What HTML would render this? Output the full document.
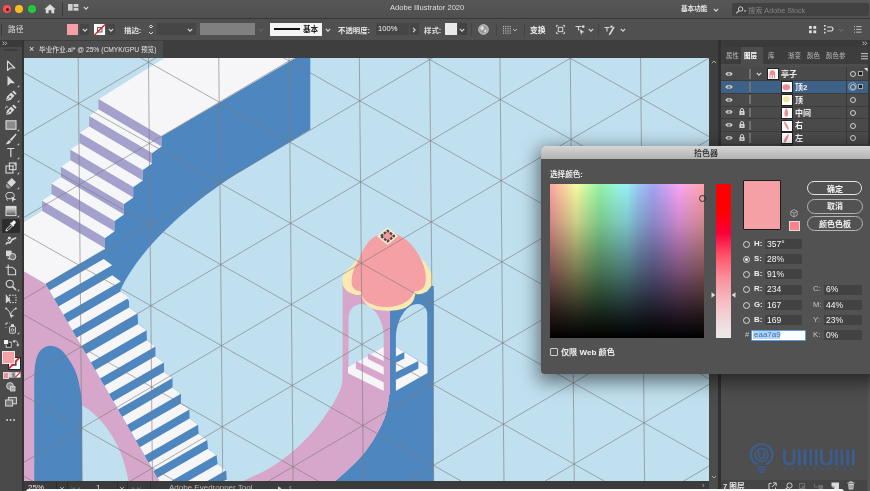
<!DOCTYPE html>
<html lang="zh"><head><meta charset="utf-8"><title>Adobe Illustrator 2020</title>
<style>
html,body{margin:0;padding:0}
body{width:870px;height:491px;position:relative;overflow:hidden;background:#4a4a4a;font-family:"Liberation Sans","Noto Sans CJK SC",sans-serif;font-size:8px;line-height:10px;color:#e6e6e6}
.abs{position:absolute}
.t{position:absolute;white-space:nowrap;line-height:10px;height:10px;will-change:transform}
.b{font-weight:bold}
.inp{position:absolute;background:#424242;border-radius:1px}
svg{overflow:visible}
</style></head>
<body>
<div class="abs" style="left:0px;top:0px;width:870px;height:19px;background:#515151;background:linear-gradient(#575757,#4f4f4f)"></div>
<div class="abs" style="left:0px;top:18px;width:870px;height:1.2px;background:#383838;"></div>
<div class="abs" style="left:3.4px;top:5.299999999999999px;width:7.8px;height:7.8px;border-radius:50%;background:#fc4f55"></div>
<div class="abs" style="left:5.8px;top:7.699999999999999px;width:3px;height:3px;border-radius:50%;background:#5a0a0d"></div>
<div class="abs" style="left:15.4px;top:5.299999999999999px;width:7.8px;height:7.8px;border-radius:50%;background:#fdbc1e"></div>
<div class="abs" style="left:27.8px;top:5.299999999999999px;width:7.8px;height:7.8px;border-radius:50%;background:#1fca3c"></div>
<svg class="abs" style="left:44px;top:4px" width="12" height="10" viewBox="0 0 12 10"><path d="M6,0.3 L0.3,5.2 H1.8 V9.3 H4.6 V6.2 H7.4 V9.3 H10.2 V5.2 H11.7 Z" fill="#dcdcdc"/></svg>
<div class="abs" style="left:62px;top:2px;width:1px;height:14px;background:#3a3a3a;"></div>
<svg class="abs" style="left:67.8px;top:4.3px" width="11" height="7" viewBox="0 0 11 7"><rect x="0" y="0" width="4.6" height="6.7" fill="#cfcfcf"/><rect x="5.6" y="0" width="4.8" height="2.9" fill="#cfcfcf"/><rect x="5.6" y="3.8" width="4.8" height="2.9" fill="#cfcfcf"/></svg>
<svg class="abs" style="left:81.7px;top:3.8px" width="8" height="8" viewBox="-4 -4 8 8"><path d="M-2.2,-1.1 L0,1.1 L2.2,-1.1" fill="none" stroke="#d8d8d8" stroke-width="1.1"/></svg>
<div class="t" style="left:390px;top:3.3px;font-size:7.6px;color:#dedede">Adobe Illustrator 2020</div>
<div class="t b" style="left:681px;top:4.4px;font-size:6.6px;color:#e8e8e8">基本功能</div>
<svg class="abs" style="left:712px;top:5.800000000000001px" width="8" height="8" viewBox="-4 -4 8 8"><path d="M-2.2,-1.1 L0,1.1 L2.2,-1.1" fill="none" stroke="#d8d8d8" stroke-width="1.1"/></svg>
<div class="abs" style="left:732px;top:3px;width:136.5px;height:12.6px;background:#424242;border-radius:2px"></div>
<svg class="abs" style="left:735px;top:5.5px" width="12" height="8" viewBox="0 0 12 8"><circle cx="5.6" cy="3" r="2.2" fill="none" stroke="#cfcfcf" stroke-width="1"/><path d="M4,4.6 L1.2,7.4" stroke="#cfcfcf" stroke-width="1.1"/><path d="M8.6,4.6 L10,6 L11.4,4.6 Z" fill="#cfcfcf"/></svg>
<div class="t" style="left:748px;top:5.6px;font-size:7.2px;color:#858585">搜索 Adobe Stock</div>
<div class="abs" style="left:0px;top:19.2px;width:870px;height:20.8px;background:#505050;"></div>
<div class="abs" style="left:1.2px;top:23.5px;width:1.2px;height:12.5px;background:#3a3a3a;"></div>
<div class="t" style="left:7.5px;top:25.4px;font-size:7.8px;color:#dadada">路径</div>
<div class="abs" style="left:67px;top:23.6px;width:11.3px;height:11.6px;background:#f4a0a4;"></div>
<div class="abs" style="left:80px;top:23.6px;width:8.6px;height:11.6px;background:#464646;"></div>
<svg class="abs" style="left:80.5px;top:25.6px" width="8" height="8" viewBox="-4 -4 8 8"><path d="M-2.2,-1.1 L0,1.1 L2.2,-1.1" fill="none" stroke="#d8d8d8" stroke-width="1.1"/></svg>
<div class="abs" style="left:93.5px;top:23.6px;width:11.6px;height:11.6px;background:#ffffff;"></div>
<svg class="abs" style="left:93.5px;top:23.6px" width="11.6" height="11.6" viewBox="0 0 11.6 11.6"><rect x="3.6" y="3.6" width="4.4" height="4.4" fill="none" stroke="#555" stroke-width="1"/><path d="M0.5,11.1 L11.1,0.5" stroke="#e0202a" stroke-width="1.5"/></svg>
<div class="abs" style="left:106.5px;top:23.6px;width:8.6px;height:11.6px;background:#464646;"></div>
<svg class="abs" style="left:106.6px;top:25.6px" width="8" height="8" viewBox="-4 -4 8 8"><path d="M-2.2,-1.1 L0,1.1 L2.2,-1.1" fill="none" stroke="#d8d8d8" stroke-width="1.1"/></svg>
<div class="t b" style="left:124px;top:25.6px;font-size:7.4px;color:#e0e0e0">描边:</div>
<svg class="abs" style="left:146.6px;top:22.6px" width="8" height="8" viewBox="-4 -4 8 8"><path d="M-2,-1.0 L0,1.0 L2,-1.0" fill="none" stroke="#d8d8d8" stroke-width="1"/></svg>
<svg class="abs" style="left:146.6px;top:28.5px" width="8" height="8" viewBox="-4 -4 8 8"><path d="M-2,-1 L0,1 L2,-1" fill="none" stroke="#d8d8d8" stroke-width="1"/></svg>
<svg class="abs" style="left:146.6px;top:22.3px" width="8" height="8" viewBox="-4 -4 8 8"><path d="M-2,1 L0,-1 L2,1" fill="none" stroke="#d8d8d8" stroke-width="1"/></svg>
<div class="abs" style="left:156.5px;top:23.3px;width:39px;height:12.2px;background:#464646;border-radius:1px"></div>
<svg class="abs" style="left:186.3px;top:25.6px" width="8" height="8" viewBox="-4 -4 8 8"><path d="M-2.2,-1.1 L0,1.1 L2.2,-1.1" fill="none" stroke="#d8d8d8" stroke-width="1.1"/></svg>
<div class="abs" style="left:200px;top:23.3px;width:54.5px;height:12.2px;background:#808080;"></div>
<svg class="abs" style="left:257px;top:25.6px" width="8" height="8" viewBox="-4 -4 8 8"><path d="M-2.2,-1.1 L0,1.1 L2.2,-1.1" fill="none" stroke="#666" stroke-width="1.1"/></svg>
<div class="abs" style="left:270px;top:22.8px;width:52px;height:12.8px;background:#f4f4f4;"></div>
<div class="abs" style="left:273.5px;top:28.3px;width:26.5px;height:2px;background:#111;"></div>
<div class="t b" style="left:303.2px;top:25.4px;font-size:7.6px;color:#222">基本</div>
<svg class="abs" style="left:324px;top:25.6px" width="8" height="8" viewBox="-4 -4 8 8"><path d="M-2.2,-1.1 L0,1.1 L2.2,-1.1" fill="none" stroke="#d8d8d8" stroke-width="1.1"/></svg>
<div class="t b" style="left:338px;top:25.6px;font-size:7.4px;color:#e6e6e6">不透明度:</div>
<div class="abs" style="left:375.5px;top:23.3px;width:33px;height:12.2px;background:#464646;border-radius:1px"></div>
<div class="t" style="left:378px;top:23.7px;font-size:7.6px;color:#f0f0f0">100%</div>
<div class="abs" style="left:409.5px;top:23.3px;width:9.5px;height:12.2px;background:#454545;"></div>
<svg class="abs" style="left:410px;top:25.5px" width="8" height="8" viewBox="-4 -4 8 8"><path d="M-1,-2.2 L1.2,0 L-1,2.2" fill="none" stroke="#d8d8d8" stroke-width="1.1"/></svg>
<div class="t b" style="left:423.5px;top:25.6px;font-size:7.4px;color:#e0e0e0">样式:</div>
<div class="abs" style="left:445px;top:23.3px;width:12.4px;height:12.2px;background:#e9e9e9;"></div>
<div class="abs" style="left:458px;top:23.3px;width:9px;height:12.2px;background:#424242;"></div>
<svg class="abs" style="left:458.3px;top:25.6px" width="8" height="8" viewBox="-4 -4 8 8"><path d="M-2.2,-1.1 L0,1.1 L2.2,-1.1" fill="none" stroke="#d8d8d8" stroke-width="1.1"/></svg>
<div class="abs" style="left:470.5px;top:22.5px;width:1px;height:13.5px;background:#444;"></div>
<div class="abs" style="left:495.5px;top:22.5px;width:1px;height:13.5px;background:#444;"></div>
<div class="abs" style="left:523.5px;top:22.5px;width:1px;height:13.5px;background:#444;"></div>
<div class="abs" style="left:597.5px;top:22.5px;width:1px;height:13.5px;background:#444;"></div>
<svg class="abs" style="left:477.5px;top:23.8px" width="11" height="11" viewBox="0 0 11 11"><circle cx="5.5" cy="5.5" r="4.8" fill="#9a9a9a" stroke="#d5d5d5" stroke-width="0.9"/><path d="M2.5,3 L5,2 L6,4.5 L4,6.5 L2.6,5.5 Z M6.5,6 L8.6,5.5 L8,8.2 L6.3,8.4 Z" fill="#dedede"/></svg>
<svg class="abs" style="left:503px;top:25.6px" width="8" height="8" viewBox="0 0 8 8"><rect x="0" y="0" width="1.1" height="1.1" fill="#c8c8c8"/><rect x="0" y="2.2" width="1.1" height="1.1" fill="#c8c8c8"/><rect x="0" y="4.4" width="1.1" height="1.1" fill="#c8c8c8"/><rect x="0" y="6.6" width="1.1" height="1.1" fill="#c8c8c8"/><rect x="2.2" y="0" width="1.1" height="1.1" fill="#c8c8c8"/><rect x="2.2" y="2.2" width="1.1" height="1.1" fill="#c8c8c8"/><rect x="2.2" y="4.4" width="1.1" height="1.1" fill="#c8c8c8"/><rect x="2.2" y="6.6" width="1.1" height="1.1" fill="#c8c8c8"/><rect x="4.4" y="0" width="1.1" height="1.1" fill="#c8c8c8"/><rect x="4.4" y="2.2" width="1.1" height="1.1" fill="#c8c8c8"/><rect x="4.4" y="4.4" width="1.1" height="1.1" fill="#c8c8c8"/><rect x="4.4" y="6.6" width="1.1" height="1.1" fill="#c8c8c8"/><rect x="6.6" y="0" width="1.1" height="1.1" fill="#c8c8c8"/><rect x="6.6" y="2.2" width="1.1" height="1.1" fill="#c8c8c8"/><rect x="6.6" y="4.4" width="1.1" height="1.1" fill="#c8c8c8"/><rect x="6.6" y="6.6" width="1.1" height="1.1" fill="#c8c8c8"/></svg>
<svg class="abs" style="left:511px;top:26px" width="8" height="8" viewBox="-4 -4 8 8"><path d="M-1.8,-0.9 L0,0.9 L1.8,-0.9" fill="none" stroke="#c8c8c8" stroke-width="1"/></svg>
<div class="t b" style="left:530px;top:25.7px;font-size:7.8px;color:#f0f0f0">变换</div>
<svg class="abs" style="left:555.8px;top:24.9px" width="9" height="9" viewBox="0 0 9 9"><rect x="2.3" y="2.3" width="4.4" height="4.4" fill="none" stroke="#d8d8d8" stroke-width="1"/><path d="M0.4,2.2 V0.4 H2.2 M6.8,0.4 H8.6 V2.2 M8.6,6.8 V8.6 H6.8 M2.2,8.6 H0.4 V6.8" fill="none" stroke="#d8d8d8" stroke-width="0.9"/></svg>
<svg class="abs" style="left:574.5px;top:24.5px" width="11" height="11" viewBox="0 0 11 11"><path d="M0.5,1.5 H6.5 M3.5,1.5 V5.5" stroke="#d8d8d8" stroke-width="1.1" fill="none"/><rect x="7" y="0.4" width="2.4" height="2.4" fill="#d8d8d8"/><path d="M4.6,4 L9.6,7.2 L7.2,7.6 L6.2,10 Z" fill="#d8d8d8"/></svg>
<svg class="abs" style="left:586.5px;top:25.6px" width="8" height="8" viewBox="-4 -4 8 8"><path d="M-2.2,-1.1 L0,1.1 L2.2,-1.1" fill="none" stroke="#d8d8d8" stroke-width="1.1"/></svg>
<svg class="abs" style="left:604px;top:24.5px" width="11" height="11" viewBox="0 0 11 11"><path d="M0.5,2.5 H5.5 M3,2.5 V6.5" stroke="#d8d8d8" stroke-width="1.1" fill="none"/><path d="M5.2,8.4 L9.4,1.6 L10.6,2.6 L6.6,9.4 L4.6,10.2 Z" fill="#d8d8d8"/><rect x="6.4" y="0.6" width="2.2" height="2.2" fill="#d8d8d8"/></svg>
<svg class="abs" style="left:619.4px;top:25.6px" width="8" height="8" viewBox="-4 -4 8 8"><path d="M-2.2,-1.1 L0,1.1 L2.2,-1.1" fill="none" stroke="#d8d8d8" stroke-width="1.1"/></svg>
<svg class="abs" style="left:809px;top:25.6px" width="8" height="8" viewBox="0 0 8 8"><rect x="0" y="0" width="2.8" height="2.8" fill="#e0e0e0"/><rect x="4.4" y="0" width="2.8" height="2.8" fill="#e0e0e0"/><rect x="0" y="4.4" width="2.8" height="2.8" fill="#e0e0e0"/><rect x="4.4" y="4.4" width="2.8" height="2.8" fill="#e0e0e0"/></svg>
<svg class="abs" style="left:824px;top:25px" width="10" height="9" viewBox="0 0 10 9"><rect x="0" y="0" width="1.6" height="1.6" fill="#e0e0e0"/><rect x="0" y="3.4" width="1.6" height="1.6" fill="#e0e0e0"/><rect x="0" y="6.8" width="1.6" height="1.6" fill="#e0e0e0"/><path d="M3,2 H7 A2,2 0 0 1 7,6 H3" fill="none" stroke="#e0e0e0" stroke-width="1.2"/></svg>
<svg class="abs" style="left:836.5px;top:25.6px" width="8" height="8" viewBox="-4 -4 8 8"><path d="M-2.2,-1.1 L0,1.1 L2.2,-1.1" fill="none" stroke="#6a6a6a" stroke-width="1.1"/></svg>
<svg class="abs" style="left:853.5px;top:26px" width="8" height="7" viewBox="0 0 8 7"><path d="M0,0.6 H1 M2.2,0.6 H7.5 M0,3.4 H1 M2.2,3.4 H7.5 M0,6.2 H1 M2.2,6.2 H7.5" stroke="#bdbdbd" stroke-width="1"/></svg>
<div class="abs" style="left:0px;top:40px;width:870px;height:17.2px;background:#3e3e3e;"></div>
<div class="abs" style="left:24px;top:41px;width:138.8px;height:16.8px;background:#4c4c4c;"></div>
<div class="t" style="left:28.5px;top:44.1px;font-size:9px;color:#e8e8e8">×</div>
<div class="t" style="left:38.5px;top:45.1px;font-size:6.7px;color:#e4e4e4">毕业作业.ai* @ 25% (CMYK/GPU 预览)</div>
<div class="abs" style="left:0px;top:40px;width:22.2px;height:451px;background:#4a4a4a;"></div>
<div class="abs" style="left:0px;top:40px;width:22.2px;height:7px;background:#3a3a3a;"></div>
<svg class="abs" style="left:2px;top:41.2px" width="6" height="5" viewBox="0 0 6 5"><path d="M0.5,0.5 L2.3,2.3 L0.5,4.1 M3,0.5 L4.8,2.3 L3,4.1" fill="none" stroke="#c4c4c4" stroke-width="0.9"/></svg>
<div class="abs" style="left:4px;top:49px;width:13.5px;height:2.4px;background:#3c3c3c;"></div>
<div class="abs" style="left:22.2px;top:40px;width:1.8px;height:451px;background:#343434;"></div>
<svg class="abs" style="left:5.0px;top:59.8px" width="12" height="12" viewBox="0 0 12 12"><path d="M2.5,1 L2.5,10.5 L5.2,8 L9.8,8 Z" fill="none" stroke="#d8d8d8" stroke-width="1.1" stroke-linejoin="round"/></svg>
<svg class="abs" style="left:5.0px;top:75.0px" width="12" height="12" viewBox="0 0 12 12"><path d="M2.5,0.8 L2.5,11 L5.4,8.3 L10,8.3 Z" fill="#d8d8d8"/></svg>
<svg class="abs" style="left:17.3px;top:85.2px" width="2.4" height="2.4" viewBox="0 0 2.4 2.4"><path d="M2.2,0 V2.2 H0 Z" fill="#c8c8c8"/></svg>
<svg class="abs" style="left:5.0px;top:89.8px" width="12" height="12" viewBox="0 0 12 12"><path d="M1,11 L2,6.5 L6.2,2.6 L9.4,5.8 L5.5,10 Z" fill="#d8d8d8"/><path d="M7.2,1.8 L8.6,0.4 L11.6,3.4 L10.2,4.8 Z" fill="#d8d8d8"/><circle cx="5.2" cy="6.8" r="1" fill="#4a4a4a"/><path d="M1.4,10.6 L4.6,7.4" stroke="#4a4a4a" stroke-width="0.7"/></svg>
<svg class="abs" style="left:17.3px;top:100.0px" width="2.4" height="2.4" viewBox="0 0 2.4 2.4"><path d="M2.2,0 V2.2 H0 Z" fill="#c8c8c8"/></svg>
<svg class="abs" style="left:5.0px;top:104.4px" width="12" height="12" viewBox="0 0 12 12"><path d="M1,11 L2,6.5 L6.2,2.6 L9.4,5.8 L5.5,10 Z" fill="#d8d8d8"/><path d="M7.2,1.8 L8.6,0.4 L11.6,3.4 L10.2,4.8 Z" fill="#d8d8d8"/><circle cx="5.2" cy="6.8" r="1" fill="#4a4a4a"/><path d="M1.4,10.6 L4.6,7.4" stroke="#4a4a4a" stroke-width="0.7"/><path d="M0.6,4.6 C0.2,1.8 2.6,1.6 2.8,3.6" fill="none" stroke="#d8d8d8" stroke-width="0.9"/></svg>
<svg class="abs" style="left:5.0px;top:118.5px" width="12" height="12" viewBox="0 0 12 12"><rect x="1" y="1.8" width="10" height="8.4" fill="#8a8a8a" stroke="#d8d8d8" stroke-width="1.1"/></svg>
<svg class="abs" style="left:17.3px;top:128.7px" width="2.4" height="2.4" viewBox="0 0 2.4 2.4"><path d="M2.2,0 V2.2 H0 Z" fill="#c8c8c8"/></svg>
<svg class="abs" style="left:5.0px;top:133.0px" width="12" height="12" viewBox="0 0 12 12"><path d="M10.8,0.6 L11.6,1.4 L6.4,8 L4.8,6.4 Z" fill="#d8d8d8"/><path d="M4.2,7 L5.8,8.6 C5.6,10.6 3,11.6 0.6,11.2 C2.2,10.4 2.2,8 4.2,7 Z" fill="#d8d8d8"/></svg>
<svg class="abs" style="left:17.3px;top:143.2px" width="2.4" height="2.4" viewBox="0 0 2.4 2.4"><path d="M2.2,0 V2.2 H0 Z" fill="#c8c8c8"/></svg>
<div class="t" style="left:6.6px;top:147.7px;font-size:12.5px;color:#d8d8d8;font-family:"Liberation Serif",serif;font-weight:bold">T</div>
<svg class="abs" style="left:17.3px;top:157.2px" width="2.4" height="2.4" viewBox="0 0 2.4 2.4"><path d="M2.2,0 V2.2 H0 Z" fill="#c8c8c8"/></svg>
<svg class="abs" style="left:5.0px;top:162.0px" width="12" height="12" viewBox="0 0 12 12"><rect x="1" y="4" width="7" height="7" fill="none" stroke="#d8d8d8" stroke-width="1.1"/><rect x="4.4" y="1" width="6.6" height="6.6" fill="none" stroke="#d8d8d8" stroke-width="1.1"/><path d="M8,4.4 L10.6,1.6 M8.6,1.4 H10.8 V3.6" fill="none" stroke="#d8d8d8" stroke-width="0.8"/></svg>
<svg class="abs" style="left:17.3px;top:172.2px" width="2.4" height="2.4" viewBox="0 0 2.4 2.4"><path d="M2.2,0 V2.2 H0 Z" fill="#c8c8c8"/></svg>
<svg class="abs" style="left:5.0px;top:176.5px" width="12" height="12" viewBox="0 0 12 12"><path d="M6.8,1 L11,5.2 L6.4,10 L2,5.8 Z" fill="#d8d8d8"/><path d="M1.6,6.6 L5.6,10.6 L4.6,11.4 H2.6 L0.6,9.2 Z" fill="#9a9a9a"/></svg>
<svg class="abs" style="left:17.3px;top:186.7px" width="2.4" height="2.4" viewBox="0 0 2.4 2.4"><path d="M2.2,0 V2.2 H0 Z" fill="#c8c8c8"/></svg>
<svg class="abs" style="left:5.0px;top:190.8px" width="12" height="12" viewBox="0 0 12 12"><ellipse cx="5" cy="4.6" rx="4.2" ry="3.2" fill="none" stroke="#d8d8d8" stroke-width="1"/><path d="M6.4,5.4 L11.4,8.8 L8.8,9 L7.6,11.4 Z" fill="#d8d8d8"/><path d="M2,7.2 C1,8.2 1.6,9.6 3,9.2" fill="none" stroke="#d8d8d8" stroke-width="0.8"/></svg>
<svg class="abs" style="left:5.0px;top:205.0px" width="12" height="12" viewBox="0 0 12 12"><defs><linearGradient id="tg" x1="0" x2="0" y1="0" y2="1"><stop offset="0" stop-color="#e8e8e8"/><stop offset="1" stop-color="#555"/></linearGradient></defs><rect x="1" y="1.4" width="10" height="9.2" fill="url(#tg)" stroke="#d8d8d8" stroke-width="1"/></svg>
<svg class="abs" style="left:17.3px;top:215.2px" width="2.4" height="2.4" viewBox="0 0 2.4 2.4"><path d="M2.2,0 V2.2 H0 Z" fill="#c8c8c8"/></svg>
<div class="abs" style="left:2.2px;top:218.8px;width:17.6px;height:14.6px;background:#2d2d2d;border-radius:1.5px"></div>
<svg class="abs" style="left:5.0px;top:220.0px" width="12" height="12" viewBox="0 0 12 12"><path d="M8.2,0.8 C9.4,-0.2 11.6,1.8 10.6,3.2 L8.8,5 L9.4,5.6 L8.4,6.6 L5,3.2 L6,2.2 L6.6,2.8 Z" fill="#f2f2f2"/><path d="M6,4.6 L7.4,6 L3,10.4 L1.2,11 L1,10.8 L1.6,9 Z" fill="none" stroke="#f2f2f2" stroke-width="0.9"/></svg>
<svg class="abs" style="left:5.0px;top:234.6px" width="12" height="12" viewBox="0 0 12 12"><path d="M1,9.6 C2.6,4.8 4.6,10.6 6.2,6 C7.2,3.2 9.4,4.6 11,2.4" fill="none" stroke="#d8d8d8" stroke-width="1.7"/><circle cx="4.4" cy="3" r="1.6" fill="#d8d8d8"/><path d="M2.4,4.6 L4.4,6.4" stroke="#d8d8d8" stroke-width="1"/></svg>
<svg class="abs" style="left:5.0px;top:249.0px" width="12" height="12" viewBox="0 0 12 12"><rect x="1" y="1.6" width="5.6" height="5.6" fill="#d8d8d8"/><circle cx="7.6" cy="7.6" r="3.2" fill="#777" stroke="#d8d8d8" stroke-width="1"/><path d="M2,8.6 L4.4,11.2 L4.6,9.6 L6,9.6 Z" fill="#d8d8d8"/></svg>
<svg class="abs" style="left:5.0px;top:264.0px" width="12" height="12" viewBox="0 0 12 12"><path d="M3.2,0.6 V11 M0.6,3.2 H7.4 L10.6,6.2 V10.8 H3.2" fill="none" stroke="#d8d8d8" stroke-width="1.1"/></svg>
<svg class="abs" style="left:5.0px;top:278.6px" width="12" height="12" viewBox="0 0 12 12"><circle cx="4.8" cy="4.8" r="3.6" fill="none" stroke="#d8d8d8" stroke-width="1.1"/><path d="M7.4,7.4 L11,11" stroke="#d8d8d8" stroke-width="1.5"/></svg>
<svg class="abs" style="left:17.3px;top:288.8px" width="2.4" height="2.4" viewBox="0 0 2.4 2.4"><path d="M2.2,0 V2.2 H0 Z" fill="#c8c8c8"/></svg>
<svg class="abs" style="left:5.0px;top:292.6px" width="12" height="12" viewBox="0 0 12 12"><path d="M0.8,1 L0.8,10.6 L3.4,8.2 L6,8.2 Z" fill="#d8d8d8"/><rect x="4.4" y="2.2" width="6.6" height="7.4" fill="none" stroke="#d8d8d8" stroke-width="1" stroke-dasharray="1.6 1.1"/></svg>
<svg class="abs" style="left:5.0px;top:306.6px" width="12" height="12" viewBox="0 0 12 12"><path d="M1.2,1.4 C3.4,3.2 4.6,5 5.6,7 C6.6,4.8 8,3 10.8,1.4" fill="none" stroke="#d8d8d8" stroke-width="1"/><circle cx="1.2" cy="1.4" r="1" fill="#d8d8d8"/><circle cx="10.8" cy="1.4" r="1" fill="#d8d8d8"/><path d="M4.4,6.4 L9.6,9 L7,9.4 L6.2,11.6 Z" fill="#d8d8d8"/></svg>
<svg class="abs" style="left:5.0px;top:322.0px" width="12" height="12" viewBox="0 0 12 12"><rect x="4.6" y="4.6" width="5.8" height="6.6" rx="0.8" fill="none" stroke="#d8d8d8" stroke-width="1"/><rect x="6" y="2.2" width="3" height="2.4" fill="#d8d8d8"/><circle cx="7.5" cy="8" r="1.3" fill="none" stroke="#d8d8d8" stroke-width="0.8"/><path d="M1,1 H3 M1,1 V3 M1,5 V5.8 M4.4,1 H5.2" stroke="#d8d8d8" stroke-width="0.9"/></svg>
<svg class="abs" style="left:17.3px;top:332.2px" width="2.4" height="2.4" viewBox="0 0 2.4 2.4"><path d="M2.2,0 V2.2 H0 Z" fill="#c8c8c8"/></svg>
<svg class="abs" style="left:2.6px;top:338.5px" width="9" height="9" viewBox="0 0 9 9"><rect x="3.2" y="3.2" width="5" height="5" fill="#222" stroke="#e0e0e0" stroke-width="0.9"/><rect x="0.6" y="0.6" width="5" height="5" fill="#f2f2f2" stroke="#222" stroke-width="0.6"/></svg>
<svg class="abs" style="left:12.4px;top:338.5px" width="8" height="8" viewBox="0 0 8 8"><path d="M1.6,2.2 C4.6,1.4 6.4,3 5.8,6.4" fill="none" stroke="#d8d8d8" stroke-width="1"/><path d="M0.4,2.4 L2.6,0.6 L2.6,4 Z M4.2,5.6 L7.4,5.6 L5.8,7.8 Z" fill="#d8d8d8"/></svg>
<div class="abs" style="left:8.2px;top:357px;width:10.8px;height:11.4px;background:#ffffff;border:0.6px solid #222"></div>
<svg class="abs" style="left:8.2px;top:357px" width="12" height="12.6" viewBox="0 0 12 12.6"><rect x="3.4" y="3.6" width="5.2" height="5.2" fill="#4a4a4a"/><path d="M0.8,11.6 L11.2,0.8" stroke="#e0202a" stroke-width="1.7"/></svg>
<div class="abs" style="left:2px;top:351px;width:10.6px;height:11.4px;background:#f4a0a4;border:0.6px solid #e8e8e8"></div>
<div class="abs" style="left:2.6px;top:372.3px;width:4.6px;height:4.6px;background:#f08d93;border:0.5px solid #ddd"></div>
<svg class="abs" style="left:8.6px;top:372px" width="6" height="6" viewBox="0 0 6 6"><defs><linearGradient id="tg2"><stop offset="0" stop-color="#fff"/><stop offset="1" stop-color="#666"/></linearGradient></defs><rect x="0.3" y="0.3" width="5" height="5" fill="url(#tg2)" stroke="#ddd" stroke-width="0.5"/></svg>
<svg class="abs" style="left:14.6px;top:372px" width="6" height="6" viewBox="0 0 6 6"><rect x="0.3" y="0.3" width="5" height="5" fill="#fff" stroke="#ddd" stroke-width="0.5"/><path d="M0.4,5.2 L5.2,0.4" stroke="#e0202a" stroke-width="1.2"/></svg>
<svg class="abs" style="left:4.5px;top:381.0px" width="12" height="12" viewBox="0 0 12 12"><circle cx="5" cy="5" r="3.4" fill="#8a8a8a" stroke="#d8d8d8" stroke-width="0.9"/><rect x="5.4" y="5.4" width="4.6" height="4.6" fill="#aaa" stroke="#d8d8d8" stroke-width="0.8"/></svg>
<svg class="abs" style="left:4.5px;top:396.0px" width="12" height="12" viewBox="0 0 12 12"><rect x="3.4" y="1.4" width="8" height="6.4" fill="#666" stroke="#d8d8d8" stroke-width="1"/><rect x="0.6" y="4" width="7" height="6" fill="#777" stroke="#d8d8d8" stroke-width="1"/></svg>
<div class="t" style="left:5.6px;top:415.1px;font-size:6.5px;color:#d0d0d0;letter-spacing:1.2px">•••</div>
<svg class="abs" style="left:24px;top:57px;overflow:hidden" width="685" height="424" viewBox="24 57 685 424">
<rect x="24" y="57" width="685" height="424" fill="#c0dfef"/>
<path d="M297,57 L310.3,57 L310.3,129.6 L243.2,170 C205.4,192 143,241.1 120.6,289.5 L258,481 L159,481 L45.3,283.7 L105,249 L105.0,248.3 L105.0,237.9 L114.4,231.3 L114.4,220.9 L123.8,214.4 L123.8,204.0 L133.2,197.4 L133.2,187.0 L142.6,180.5 L142.6,170.1 L152.0,163.5 L152.0,153.1 L161.4,146.6 L161.4,136.2 Z" fill="#4e86c0"/>
<polygon points="166.0,57.0 297.0,57.0 161.4,136.5 98.5,99.3" fill="#f6f6f9"/>
<polygon points="98.5,99.0 161.4,136.2 161.4,146.6 98.5,109.4" fill="#a4a1cd"/>
<polygon points="98.5,109.4 161.4,146.6 152.0,153.1 89.1,116.0" fill="#f6f6f9"/>
<polygon points="89.1,116.0 152.0,153.1 152.0,163.5 89.1,126.4" fill="#a4a1cd"/>
<polygon points="89.1,126.4 152.0,163.5 142.6,170.1 79.7,132.9" fill="#f6f6f9"/>
<polygon points="79.7,132.9 142.6,170.1 142.6,180.5 79.7,143.3" fill="#a4a1cd"/>
<polygon points="79.7,143.3 142.6,180.5 133.2,187.0 70.3,149.8" fill="#f6f6f9"/>
<polygon points="70.3,149.8 133.2,187.0 133.2,197.4 70.3,160.2" fill="#a4a1cd"/>
<polygon points="70.3,160.2 133.2,197.4 123.8,204.0 60.9,166.8" fill="#f6f6f9"/>
<polygon points="60.9,166.8 123.8,204.0 123.8,214.4 60.9,177.2" fill="#a4a1cd"/>
<polygon points="60.9,177.2 123.8,214.4 114.4,220.9 51.5,183.8" fill="#f6f6f9"/>
<polygon points="51.5,183.8 114.4,220.9 114.4,231.3 51.5,194.2" fill="#a4a1cd"/>
<polygon points="51.5,194.2 114.4,231.3 105.0,237.9 42.1,200.7" fill="#f6f6f9"/>
<polygon points="42.1,200.7 105.0,237.9 105.0,248.3 42.1,211.1" fill="#a4a1cd"/>
<polygon points="24.0,222.3 42.1,211.1 105.0,248.3 45.3,283.7 24.0,271.5" fill="#f6f6f9"/>
<path d="M120.6,289.5 L120.5,291.6 L129.0,297.8 L129.1,307.4 L137.6,313.6 L138.1,324.1 L146.6,330.3 L146.9,340.3 L155.4,346.5 L155.4,356.2 L163.9,362.4 L164.1,371.9 L172.6,378.1 L172.5,387.6 L181.0,393.8 L180.9,403.4 L189.4,409.6 L189.5,418.6 L198.0,424.8 L198.7,433.7 L207.2,439.9 L208.0,448.7 L216.5,454.9 L217.6,464.0 L226.1,470.2 L226.8,479.4 L235.3,485.6 L260,500 L260,289.5 Z" fill="#c0dfef"/>
<polygon points="103.7,259.1 112.2,265.3 54.1,298.8 49.2,290.5" fill="#f6f6f9"/>
<polygon points="112.3,275.3 120.8,281.5 63.2,314.7 58.4,306.4" fill="#f6f6f9"/>
<polygon points="120.5,291.6 129.0,297.8 72.3,330.5 67.5,322.2" fill="#f6f6f9"/>
<polygon points="129.1,307.4 137.6,313.6 81.3,346.1 76.5,337.7" fill="#f6f6f9"/>
<polygon points="138.1,324.1 146.6,330.3 90.8,362.5 86.0,354.1" fill="#f6f6f9"/>
<polygon points="146.9,340.3 155.4,346.5 100.1,378.4 95.2,370.1" fill="#f6f6f9"/>
<polygon points="155.4,356.2 163.9,362.4 109.1,394.0 104.3,385.7" fill="#f6f6f9"/>
<polygon points="164.1,371.9 172.6,378.1 118.1,409.6 113.2,401.2" fill="#f6f6f9"/>
<polygon points="172.5,387.6 181.0,393.8 127.0,425.0 122.2,416.7" fill="#f6f6f9"/>
<polygon points="180.9,403.4 189.4,409.6 135.9,440.5 131.1,432.1" fill="#f6f6f9"/>
<polygon points="189.5,418.6 198.0,424.8 144.7,455.6 139.8,447.3" fill="#f6f6f9"/>
<polygon points="198.7,433.7 207.2,439.9 153.5,470.9 148.7,462.6" fill="#f6f6f9"/>
<polygon points="208.0,448.7 216.5,454.9 162.3,486.2 157.5,477.8" fill="#f6f6f9"/>
<polygon points="217.6,464.0 226.1,470.2 171.4,501.8 166.5,493.5" fill="#f6f6f9"/>
<polygon points="226.8,479.4 235.3,485.6 180.3,517.3 175.5,509.0" fill="#f6f6f9"/>
<polygon points="24.0,271.5 45.3,283.7 159.0,481.0 24.0,481.0" fill="#d6a7ca"/>
<path d="M82,405.3 C100,416 122,440 128.7,483 L82,483 Z" fill="#c0dfef"/>
<path d="M34.3,483 C34.3,469.2 34.3,417.7 34.3,400.0 C34.3,382.3 34.1,383.4 34.3,377.0 C34.5,370.6 34.7,365.8 35.7,361.4 C36.7,357.0 38.0,353.0 40.4,350.4 C42.8,347.8 46.4,345.8 49.8,345.7 C53.2,345.6 57.4,346.9 60.8,349.5 C64.2,352.1 67.6,357.3 70.2,361.4 C72.8,365.5 74.8,369.2 76.5,373.9 C78.2,378.6 79.3,384.4 80.2,389.6 C81.1,394.8 81.8,396.9 82.1,405.3 C82.4,413.7 82.1,427.1 82.1,440.0 C82.1,452.9 82.1,475.8 82.1,483.0 Z" fill="#4e86c0"/>
<path d="M390,300 L433.7,290 L433.7,483 L333,483 C333.6,482.5 333.6,482.5 336.3,480.1 C339.0,477.7 344.8,472.7 349.0,468.7 C353.2,464.7 357.4,461.2 361.6,456.1 C365.8,451.1 370.4,444.7 374.2,438.4 C378.0,432.1 382.1,424.1 384.4,418.2 C386.7,412.3 387.4,406.9 388.1,403.0 C388.9,399.1 388.6,397.5 388.9,395.0 C389.2,392.5 389.8,389.2 390.0,388.0 Z" fill="#4e86c0"/>
<path d="M343,290 L390,300 L390,388 C389.8,389.2 389.2,392.5 388.9,395.0 C388.6,397.5 388.9,399.1 388.1,403.0 C387.4,406.9 386.7,412.3 384.4,418.2 C382.1,424.1 378.0,432.1 374.2,438.4 C370.4,444.7 365.8,451.1 361.6,456.1 C357.4,461.2 353.2,464.7 349.0,468.7 C344.8,472.7 339.0,477.7 336.3,480.1 C333.6,482.5 333.6,482.5 333.0,483.0 L238,483 C239.2,482.5 239.9,482.7 245.3,480.1 C250.7,477.5 262.6,472.4 270.6,467.5 C278.6,462.6 286.1,457.1 293.3,451.0 C300.5,444.9 307.7,437.5 313.6,430.8 C319.5,424.1 324.5,416.9 328.7,410.6 C332.9,404.3 336.6,397.3 338.8,392.9 C341.0,388.5 341.1,387.5 341.8,384.0 C342.5,380.5 342.8,374.0 343.0,372.0 Z" fill="#d6a7ca"/>
<path d="M348.5,367 V317 C349,309 355,304 361.5,304 C372,304 384,318 384,339 V347 Z" fill="#c0dfef"/>
<path d="M395.7,346.5 V339 C396,320 406,304 417.7,304 C424,304 427.5,309 427.5,316 V366 Z" fill="#c0dfef"/>
<polygon points="347.6,367.6 384.0,346.8 384.0,391.0 347.6,372.9" fill="#f6f6f9"/>
<polygon points="355.9,360.9 355.9,368.5 384.0,382.4 384.0,374.8" fill="#d6a7ca"/>
<polygon points="367.9,353.3 367.9,359.0 384.0,366.9 384.0,361.2" fill="#d6a7ca"/>
<polygon points="395.7,346.5 431.0,368.5 431.0,371.0 395.7,391.0" fill="#f6f6f9"/>
<polygon points="418.4,360.9 418.4,368.5 395.7,379.9 395.7,372.3" fill="#4e86c0"/>
<polygon points="404.3,352.0 404.3,358.4 395.7,362.7 395.7,356.4" fill="#4e86c0"/>
<rect x="383.7" y="300" width="6.3" height="95" fill="#d6a7ca"/>
<rect x="390" y="300" width="5.7" height="95" fill="#4e86c0"/>
<rect x="427.5" y="286" width="6.2" height="94" fill="#4e86c0"/>
<rect x="342.6" y="280" width="5.3" height="96" fill="#d6a7ca"/>
<path d="M351.8,266.2 C350.8,267.0 347.2,269.1 345.6,271.1 C344.1,273.1 342.9,276.0 342.5,278.4 C342.1,280.8 342.3,283.5 343.2,285.7 C344.1,287.9 345.9,290.2 348.1,291.8 C350.3,293.4 354.4,294.6 356.6,295.0 C358.8,295.4 360.7,294.4 361.5,294.3 C361.7,295.1 361.5,297.2 362.7,299.2 C363.9,301.2 366.2,304.7 368.9,306.5 C371.5,308.3 374.5,309.4 378.6,310.1 C382.7,310.8 388.8,311.0 393.3,310.6 C397.8,310.2 402.2,309.2 405.5,307.7 C408.8,306.2 411.2,303.8 412.8,301.6 C414.4,299.4 414.9,295.5 415.3,294.3 C416.5,294.2 420.4,294.3 422.6,293.5 C424.8,292.7 427.1,291.1 428.7,289.4 C430.3,287.7 431.9,285.8 432.4,283.3 C432.9,280.9 432.5,277.1 431.9,274.7 C431.3,272.2 429.8,270.7 428.7,268.6 C427.6,266.5 425.6,263.1 425.0,262.0 C423.5,261.0 421.8,258.0 416.0,256.0 C410.2,254.0 399.0,250.0 390.0,250.0 C381.0,250.0 368.4,253.3 362.0,256.0 C355.6,258.7 353.5,264.5 351.8,266.2 Z" fill="#fbe9b4"/>
<path d="M388.5,232.9 C387.5,233.0 384.4,233.1 382.5,233.5 C380.6,233.9 379.1,234.5 377.3,235.3 C375.6,236.2 374.0,236.8 372.0,238.6 C370.0,240.4 367.5,243.0 365.5,246.0 C363.5,249.0 361.9,252.6 360.0,256.4 C358.1,260.2 355.6,264.9 354.2,268.6 C352.8,272.3 352.1,275.5 351.8,278.4 C351.5,281.2 351.4,283.7 352.2,285.7 C353.0,287.7 355.1,289.6 356.6,290.6 C358.1,291.6 360.3,291.6 361.0,291.8 C361.5,293.0 362.3,297.2 364.0,299.2 C365.7,301.2 368.4,302.8 371.3,304.0 C374.2,305.2 377.4,306.3 381.1,306.7 C384.8,307.1 389.4,307.1 393.3,306.5 C397.2,305.9 401.2,304.4 404.3,302.8 C407.4,301.2 410.0,298.5 411.6,296.7 C413.2,294.9 413.6,292.6 414.0,291.8 C415.0,291.5 418.4,291.1 420.2,290.1 C421.9,289.1 423.6,287.9 424.5,285.7 C425.4,283.5 425.9,280.4 425.8,277.2 C425.7,273.9 425.0,269.9 423.8,266.2 C422.6,262.5 420.9,258.7 418.9,255.2 C416.8,251.7 414.0,247.8 411.5,245.0 C409.0,242.2 406.3,240.3 404.0,238.6 C401.7,236.9 399.3,235.5 397.5,234.6 C395.7,233.7 394.5,233.6 393.0,233.3 C391.5,233.0 389.2,233.0 388.5,232.9 Z" fill="#f4a0a4"/>
<g transform="translate(387.5,236.1)"><path d="M-9.5,0 L0,-7.9 L9.5,0 L0,7.9 Z" fill="#f6ecd0" stroke="#f6ecd0" stroke-width="1.5" stroke-linejoin="round"/><path d="M-6.6,0 L0,-5.4 L6.6,0 L0,5.4 Z" fill="#ee9aa0" stroke="#4a4444" stroke-width="2.2" stroke-dasharray="2.6 1.3" stroke-linejoin="round"/></g>
<g transform="rotate(-0.54 289.1 60.9)"><path d="M-62.4,0 V560 M7.9,0 V560 M78.2,0 V560 M148.5,0 V560 M218.8,0 V560 M289.1,0 V560 M359.4,0 V560 M429.7,0 V560 M500.0,0 V560 M570.3,0 V560 M640.6,0 V560 M710.9,0 V560 M781.2,0 V560 M-20,-361.1 L760,89.3 M-20,-279.9 L760,170.4 M-20,77.0 L760,-373.3 M-20,-198.7 L760,251.6 M-20,158.2 L760,-292.1 M-20,-117.6 L760,332.8 M-20,239.4 L760,-211.0 M-20,-36.4 L760,413.9 M-20,320.5 L760,-129.8 M-20,44.8 L760,495.1 M-20,401.7 L760,-48.6 M-20,126.0 L760,576.3 M-20,482.9 L760,32.5 M-20,207.1 L760,657.5 M-20,564.0 L760,113.7 M-20,288.3 L760,738.6 M-20,645.2 L760,194.9 M-20,369.5 L760,819.8 M-20,726.4 L760,276.0 M-20,450.6 L760,901.0 M-20,807.5 L760,357.2 M-20,888.7 L760,438.4 M-20,969.9 L760,519.6" stroke="#7d7d7d" stroke-opacity="0.68" stroke-width="0.9" fill="none"/></g>
</svg>
<div class="abs" style="left:162.8px;top:57px;width:546.2px;height:0.6px;background:#3e3e3e;"></div>
<div class="abs" style="left:24px;top:57px;width:138.8px;height:0.6px;background:#4c4c4c;"></div>
<div class="abs" style="left:24px;top:481px;width:685px;height:10px;background:#3b3b3b;"></div>
<div class="t" style="left:27.5px;top:483.1px;font-size:8px;color:#e6e6e6">25%</div>
<svg class="abs" style="left:58px;top:484px" width="8" height="8" viewBox="-4 -4 8 8"><path d="M-1.8,-0.9 L0,0.9 L1.8,-0.9" fill="none" stroke="#bbb" stroke-width="1"/></svg>
<div class="abs" style="left:56px;top:482px;width:0.8px;height:9px;background:#2c2c2c;"></div>
<div class="abs" style="left:66.5px;top:482px;width:0.8px;height:9px;background:#2c2c2c;"></div>
<div class="t" style="left:71px;top:483.0px;font-size:5.5px;color:#666">|◂ ◂</div>
<div class="t" style="left:95.5px;top:483.1px;font-size:8px;color:#e6e6e6">1</div>
<svg class="abs" style="left:118px;top:484px" width="8" height="8" viewBox="-4 -4 8 8"><path d="M-1.8,-0.9 L0,0.9 L1.8,-0.9" fill="none" stroke="#bbb" stroke-width="1"/></svg>
<div class="abs" style="left:117px;top:482px;width:0.8px;height:9px;background:#2c2c2c;"></div>
<div class="abs" style="left:127px;top:482px;width:0.8px;height:9px;background:#2c2c2c;"></div>
<div class="t" style="left:132px;top:483.0px;font-size:5.5px;color:#666">▸ ▸|</div>
<div class="abs" style="left:150px;top:482px;width:0.8px;height:9px;background:#2c2c2c;"></div>
<div class="t" style="left:168.5px;top:483.1px;font-size:8px;color:#b8b8b8">Adobe Eyedropper Tool</div>
<div class="t" style="left:277.5px;top:482.7px;font-size:7px;color:#d0d0d0">▸</div>
<div class="t" style="left:289px;top:482.5px;font-size:8px;color:#aaa">‹</div>
<div class="t" style="left:702px;top:481.0px;font-size:8px;color:#aaa">›</div>
<div class="abs" style="left:709px;top:57px;width:9.5px;height:434px;background:#3f3f3f;"></div>
<div class="abs" style="left:709px;top:300px;width:9.5px;height:191px;background:#4c4c4c;"></div>
<svg class="abs" style="left:709.5px;top:58px" width="8" height="8" viewBox="-4 -4 8 8"><path d="M-2.2,1.2 L0,-1 L2.2,1.2" fill="none" stroke="#aaa" stroke-width="1"/></svg>
<svg class="abs" style="left:709.5px;top:472.5px" width="8" height="8" viewBox="-4 -4 8 8"><path d="M-2,-1.0 L0,1.0 L2,-1.0" fill="none" stroke="#aaa" stroke-width="1"/></svg>
<div class="abs" style="left:718.3px;top:40px;width:2.7px;height:451px;background:#303030;"></div>
<div class="abs" style="left:721px;top:40px;width:149px;height:451px;background:#4e4e4e;"></div>
<div class="abs" style="left:721px;top:66.7px;width:147px;height:92px;background:#4a4a4a;"></div>
<div class="abs" style="left:721px;top:40px;width:149px;height:6.5px;background:#3a3a3a;"></div>
<svg class="abs" style="left:862.3px;top:41.3px" width="6" height="5" viewBox="0 0 6 5"><path d="M0.5,0.5 L2.3,2.3 L0.5,4.1 M3,0.5 L4.8,2.3 L3,4.1" fill="none" stroke="#c4c4c4" stroke-width="0.9"/></svg>
<div class="abs" style="left:721px;top:46.5px;width:149px;height:17px;background:#3d3d3d;"></div>
<div class="abs" style="left:740.5px;top:47.4px;width:22.3px;height:16.2px;background:#4d4d4d;"></div>
<div class="t" style="left:726px;top:51.2px;font-size:6.5px;color:#bdbdbd">属性</div>
<div class="t b" style="left:743.5px;top:51.2px;font-size:6.5px;color:#ffffff">图层</div>
<div class="t" style="left:767.8px;top:51.2px;font-size:6.5px;color:#bdbdbd">库</div>
<div class="t" style="left:787.6px;top:51.2px;font-size:6.5px;color:#bdbdbd">渐变</div>
<div class="t" style="left:807.2px;top:51.2px;font-size:6.5px;color:#bdbdbd">颜色</div>
<div class="t" style="left:826.2px;top:51.2px;font-size:6.5px;color:#bdbdbd">颜色参</div>
<svg class="abs" style="left:860.8px;top:52.6px" width="8" height="7" viewBox="0 0 8 7"><path d="M0,0.6 H7 M0,3.2 H7 M0,5.8 H7" stroke="#c8c8c8" stroke-width="1"/></svg>
<div class="abs" style="left:721px;top:63.5px;width:149px;height:3.2px;background:#4d4d4d;"></div>
<div class="abs" style="left:721px;top:79.8px;width:149px;height:0.7px;background:#3c3c3c;"></div>
<svg class="abs" style="left:724.7px;top:70.8px" width="8" height="6" viewBox="0 0 8 6"><path d="M0.3,3 C2,0.4 6,0.4 7.7,3 C6,5.6 2,5.6 0.3,3 Z" fill="#d6d6d6"/><circle cx="4" cy="3" r="1.5" fill="#4a4a4a"/><circle cx="4" cy="3" r="0.7" fill="#d6d6d6"/></svg>
<div class="abs" style="left:767px;top:68.2px;width:9.6px;height:10.2px;background:#fff;border:0.8px solid #222"></div>
<svg class="abs" style="left:767.4px;top:68.6px" width="10.6" height="10.6" viewBox="0 0 10.6 10.6"><path d="M2.4,4.5 C2.4,1.8 4.2,1 5.3,1 C6.4,1 8.2,1.8 8.2,4.5 V9.5 H7 V6 H6 V9.5 H4.6 V6 H3.6 V9.5 H2.4 Z" fill="#ee8d93"/></svg>
<div class="t b" style="left:781.2px;top:70.1px;font-size:8px;color:#f2f2f2">亭子</div>
<div class="abs" style="left:849.6px;top:71.2px;width:4px;height:4px;border-radius:50%;border:0.9px solid #d0d0d0"></div>
<div class="abs" style="left:858.3px;top:71.39999999999999px;width:3px;height:3px;background:#1c1c1c;border:0.8px solid #a8a8a8"></div>
<div class="abs" style="left:721px;top:80.6px;width:147px;height:12.2px;background:#3e6187;"></div>
<div class="abs" style="left:721px;top:92.8px;width:149px;height:0.7px;background:#3c3c3c;"></div>
<svg class="abs" style="left:724.7px;top:83.8px" width="8" height="6" viewBox="0 0 8 6"><path d="M0.3,3 C2,0.4 6,0.4 7.7,3 C6,5.6 2,5.6 0.3,3 Z" fill="#d6d6d6"/><circle cx="4" cy="3" r="1.5" fill="#4a4a4a"/><circle cx="4" cy="3" r="0.7" fill="#d6d6d6"/></svg>
<div class="abs" style="left:781px;top:81.2px;width:9.6px;height:10.2px;background:#fff;border:0.8px solid #222"></div>
<svg class="abs" style="left:781.4px;top:81.6px" width="10.6" height="10.6" viewBox="0 0 10.6 10.6"><ellipse cx="5.3" cy="5.3" rx="3.8" ry="3" fill="#ee8d93"/></svg>
<div class="t b" style="left:795.2px;top:83.1px;font-size:8px;color:#f2f2f2">顶2</div>
<div class="abs" style="left:849.6px;top:84.2px;width:4px;height:4px;border-radius:50%;border:0.9px solid #d0d0d0"></div>
<div class="abs" style="left:847.8000000000001px;top:82.39999999999999px;width:8.8px;height:8.8px;box-sizing:border-box;border-radius:50%;border:1.7px solid #8ba3bd"></div>
<div class="abs" style="left:858.3px;top:84.39999999999999px;width:3px;height:3px;background:#1c1c1c;border:0.8px solid #a8a8a8"></div>
<div class="abs" style="left:721px;top:105.5px;width:149px;height:0.7px;background:#3c3c3c;"></div>
<svg class="abs" style="left:724.7px;top:96.5px" width="8" height="6" viewBox="0 0 8 6"><path d="M0.3,3 C2,0.4 6,0.4 7.7,3 C6,5.6 2,5.6 0.3,3 Z" fill="#d6d6d6"/><circle cx="4" cy="3" r="1.5" fill="#4a4a4a"/><circle cx="4" cy="3" r="0.7" fill="#d6d6d6"/></svg>
<div class="abs" style="left:781px;top:93.9px;width:9.6px;height:10.2px;background:#fff;border:0.8px solid #222"></div>
<svg class="abs" style="left:781.4px;top:94.3px" width="10.6" height="10.6" viewBox="0 0 10.6 10.6"><ellipse cx="5.3" cy="5.3" rx="3.3" ry="3" fill="#f8e3a0"/></svg>
<div class="t b" style="left:795.2px;top:95.8px;font-size:8px;color:#f2f2f2">顶</div>
<div class="abs" style="left:849.6px;top:96.9px;width:4px;height:4px;border-radius:50%;border:0.9px solid #d0d0d0"></div>
<div class="abs" style="left:721px;top:118.3px;width:149px;height:0.7px;background:#3c3c3c;"></div>
<svg class="abs" style="left:724.7px;top:109.3px" width="8" height="6" viewBox="0 0 8 6"><path d="M0.3,3 C2,0.4 6,0.4 7.7,3 C6,5.6 2,5.6 0.3,3 Z" fill="#d6d6d6"/><circle cx="4" cy="3" r="1.5" fill="#4a4a4a"/><circle cx="4" cy="3" r="0.7" fill="#d6d6d6"/></svg>
<svg class="abs" style="left:739.2px;top:108.3px" width="6" height="8" viewBox="0 0 6 8"><rect x="0.4" y="3" width="5.2" height="4" rx="0.6" fill="#d6d6d6"/><path d="M1.5,3 V2 A1.5,1.5 0 0 1 4.5,2 V3" fill="none" stroke="#d6d6d6" stroke-width="1"/><rect x="2.5" y="4.2" width="1" height="1.6" fill="#4a4a4a"/></svg>
<div class="abs" style="left:781px;top:106.7px;width:9.6px;height:10.2px;background:#fff;border:0.8px solid #222"></div>
<svg class="abs" style="left:781.4px;top:107.1px" width="10.6" height="10.6" viewBox="0 0 10.6 10.6"><path d="M5.3,1 C7.5,4 7.5,7 6.5,9.6 H4 C3,7 3,4 5.3,1 Z" fill="#ee8d93"/></svg>
<div class="t b" style="left:795.2px;top:108.6px;font-size:8px;color:#f2f2f2">中间</div>
<div class="abs" style="left:849.6px;top:109.7px;width:4px;height:4px;border-radius:50%;border:0.9px solid #d0d0d0"></div>
<div class="abs" style="left:721px;top:131.1px;width:149px;height:0.7px;background:#3c3c3c;"></div>
<svg class="abs" style="left:724.7px;top:122.1px" width="8" height="6" viewBox="0 0 8 6"><path d="M0.3,3 C2,0.4 6,0.4 7.7,3 C6,5.6 2,5.6 0.3,3 Z" fill="#d6d6d6"/><circle cx="4" cy="3" r="1.5" fill="#4a4a4a"/><circle cx="4" cy="3" r="0.7" fill="#d6d6d6"/></svg>
<svg class="abs" style="left:739.2px;top:121.1px" width="6" height="8" viewBox="0 0 6 8"><rect x="0.4" y="3" width="5.2" height="4" rx="0.6" fill="#d6d6d6"/><path d="M1.5,3 V2 A1.5,1.5 0 0 1 4.5,2 V3" fill="none" stroke="#d6d6d6" stroke-width="1"/><rect x="2.5" y="4.2" width="1" height="1.6" fill="#4a4a4a"/></svg>
<div class="abs" style="left:781px;top:119.5px;width:9.6px;height:10.2px;background:#fff;border:0.8px solid #222"></div>
<svg class="abs" style="left:781.4px;top:119.89999999999999px" width="10.6" height="10.6" viewBox="0 0 10.6 10.6"><path d="M2.5,1 C5,2 7.5,6 8,9.6 H6.5 C5,7 3,4 2.5,1 Z" fill="#ee8d93"/></svg>
<div class="t b" style="left:795.2px;top:121.4px;font-size:8px;color:#f2f2f2">右</div>
<div class="abs" style="left:849.6px;top:122.5px;width:4px;height:4px;border-radius:50%;border:0.9px solid #d0d0d0"></div>
<div class="abs" style="left:721px;top:143.9px;width:149px;height:0.7px;background:#3c3c3c;"></div>
<svg class="abs" style="left:724.7px;top:134.9px" width="8" height="6" viewBox="0 0 8 6"><path d="M0.3,3 C2,0.4 6,0.4 7.7,3 C6,5.6 2,5.6 0.3,3 Z" fill="#d6d6d6"/><circle cx="4" cy="3" r="1.5" fill="#4a4a4a"/><circle cx="4" cy="3" r="0.7" fill="#d6d6d6"/></svg>
<svg class="abs" style="left:739.2px;top:133.9px" width="6" height="8" viewBox="0 0 6 8"><rect x="0.4" y="3" width="5.2" height="4" rx="0.6" fill="#d6d6d6"/><path d="M1.5,3 V2 A1.5,1.5 0 0 1 4.5,2 V3" fill="none" stroke="#d6d6d6" stroke-width="1"/><rect x="2.5" y="4.2" width="1" height="1.6" fill="#4a4a4a"/></svg>
<div class="abs" style="left:781px;top:132.3px;width:9.6px;height:10.2px;background:#fff;border:0.8px solid #222"></div>
<svg class="abs" style="left:781.4px;top:132.70000000000002px" width="10.6" height="10.6" viewBox="0 0 10.6 10.6"><path d="M8,1 C5.5,2 3,6 2.5,9.6 H4.5 C6,7 7.5,4 8,1 Z" fill="#ee8d93"/></svg>
<div class="t b" style="left:795.2px;top:134.2px;font-size:8px;color:#f2f2f2">左</div>
<div class="abs" style="left:849.6px;top:135.3px;width:4px;height:4px;border-radius:50%;border:0.9px solid #d0d0d0"></div>
<div class="abs" style="left:721px;top:156.7px;width:149px;height:0.7px;background:#3c3c3c;"></div>
<svg class="abs" style="left:724.7px;top:147.7px" width="8" height="6" viewBox="0 0 8 6"><path d="M0.3,3 C2,0.4 6,0.4 7.7,3 C6,5.6 2,5.6 0.3,3 Z" fill="#d6d6d6"/><circle cx="4" cy="3" r="1.5" fill="#4a4a4a"/><circle cx="4" cy="3" r="0.7" fill="#d6d6d6"/></svg>
<div class="abs" style="left:781px;top:145.1px;width:9.6px;height:10.2px;background:#fff;border:0.8px solid #222"></div>
<svg class="abs" style="left:781.4px;top:145.5px" width="10.6" height="10.6" viewBox="0 0 10.6 10.6"></svg>
<div class="abs" style="left:749.2px;top:69.2px;width:1.5px;height:9.6px;background:#727272;"></div>
<div class="abs" style="left:749.2px;top:82.2px;width:1.5px;height:9.6px;background:#727272;"></div>
<div class="abs" style="left:749.2px;top:94.9px;width:1.5px;height:9.6px;background:#727272;"></div>
<div class="abs" style="left:749.2px;top:107.7px;width:1.5px;height:9.6px;background:#727272;"></div>
<div class="abs" style="left:749.2px;top:120.5px;width:1.5px;height:9.6px;background:#727272;"></div>
<div class="abs" style="left:749.2px;top:133.3px;width:1.5px;height:9.6px;background:#727272;"></div>
<div class="abs" style="left:749.2px;top:146.1px;width:1.5px;height:9.6px;background:#727272;"></div>
<div class="abs" style="left:846.2px;top:66.7px;width:0.9px;height:92px;background:#3a3a3a;"></div>
<svg class="abs" style="left:754.8px;top:69.9px" width="8" height="8" viewBox="-4 -4 8 8"><path d="M-2.2,-1.1 L0,1.1 L2.2,-1.1" fill="none" stroke="#d8d8d8" stroke-width="1.1"/></svg>
<svg class="abs" style="left:863.5px;top:67.6px" width="4" height="4" viewBox="0 0 4 4"><path d="M0,0 H3.6 V3.6 Z" fill="#e8e8e8"/></svg>
<div class="abs" style="left:868px;top:40px;width:2px;height:110px;background:#383838;"></div>
<div class="abs" style="left:867.6px;top:370px;width:2.4px;height:121px;background:#565656;"></div>
<div class="abs" style="left:721px;top:480px;width:146.2px;height:11px;background:#454545;"></div>
<div class="t b" style="left:722.5px;top:482.4px;font-size:7.6px;color:#e6e6e6">7 图层</div>
<svg class="abs" style="left:768px;top:481.5px" width="9" height="9" viewBox="0 0 9 9"><path d="M3.5,1.5 H1 V8 H7.5 V5.5" fill="none" stroke="#d0d0d0" stroke-width="1"/><path d="M4,5 L8,1 M5,0.8 H8.2 V4" fill="none" stroke="#d0d0d0" stroke-width="1"/></svg>
<svg class="abs" style="left:784px;top:481.5px" width="9" height="9" viewBox="0 0 9 9"><circle cx="5.5" cy="3.5" r="2.6" fill="none" stroke="#d0d0d0" stroke-width="1"/><path d="M3.6,5.4 L0.8,8.2" stroke="#d0d0d0" stroke-width="1.2"/></svg>
<svg class="abs" style="left:799px;top:482.5px" width="8" height="7" viewBox="0 0 8 7"><rect x="0.5" y="0.5" width="5" height="5" fill="none" stroke="#6e6e6e" stroke-width="1"/><rect x="3" y="3" width="3" height="3" fill="#6e6e6e"/></svg>
<svg class="abs" style="left:814px;top:482.5px" width="10" height="7" viewBox="0 0 10 7"><path d="M0.5,1 V4 H4" fill="none" stroke="#6e6e6e" stroke-width="1"/><rect x="4.5" y="2" width="4.5" height="4" fill="#6e6e6e"/></svg>
<svg class="abs" style="left:831px;top:481.8px" width="9" height="8" viewBox="0 0 9 8"><path d="M0.5,0.5 H8 V7 H3.6 L0.5,4.2 Z" fill="#dcdcdc"/><path d="M0.5,4.2 H3.6 V7" fill="#9a9a9a"/></svg>
<svg class="abs" style="left:846.5px;top:481.2px" width="8" height="9" viewBox="0 0 8 9"><path d="M0.4,2 H7.6 M2.8,2 V0.8 H5.2 V2" fill="none" stroke="#d0d0d0" stroke-width="1"/><path d="M1.2,3 H6.8 L6.3,8.6 H1.7 Z" fill="#d0d0d0"/><path d="M3,4 V7.6 M5,4 V7.6" stroke="#555" stroke-width="0.7"/></svg>
<svg class="abs" style="left:748.6px;top:443px" width="28" height="34" viewBox="0 0 28 34"><path d="M8.2,21.6 C3.6,18.8 1.6,15.6 1.6,12 A11,11 0 0 1 23.6,12 C23.6,15.6 21.6,18.8 17,21.6" fill="none" stroke="#3b5f95" stroke-width="2"/><circle cx="12.6" cy="12" r="6.4" fill="none" stroke="#3b5f95" stroke-width="1.6"/><path d="M9.8,8.6 V12.6 A2.8,2.8 0 0 0 15.4,12.6 V8.6" fill="none" stroke="#3b5f95" stroke-width="1.7"/><path d="M8.4,24 H16.8 M9,26.6 H16.2 M10.4,29.2 H14.8" stroke="#3b5f95" stroke-width="1.7"/></svg>
<div class="t" style="left:782.2px;top:443.6px;height:26px;line-height:26px;font-size:22.8px;color:#3b5f95;font-family:'Liberation Sans',sans-serif;transform-origin:0 0;transform:scaleX(0.885);-webkit-text-stroke:0.8px #3b5f95">UIIIIUIIII</div>
<div class="t" style="left:783.5px;top:463.9px;font-size:7.5px;color:#3b5f95;letter-spacing:1.35px;opacity:.85">• • • • • • • • • •</div>
<div class="abs" style="left:540.5px;top:146px;width:340px;height:228px;border-radius:4px;background:#525252;box-shadow:0 5px 18px 3px rgba(0,0,0,.5)"></div>
<div class="abs" style="left:540.5px;top:146px;width:340px;height:13px;border-radius:4px 0 0 0;background:linear-gradient(#d6d6d6,#b2b2b2)"></div>
<div class="t b" style="left:694px;top:148.5px;font-size:8px;color:#3c3c3c">拾色器</div>
<div class="t b" style="left:549.5px;top:169.7px;font-size:7.6px;color:#f0f0f0">选择颜色:</div>
<div class="abs" style="left:550px;top:184px;width:154px;height:154px;background:linear-gradient(to bottom,rgba(0,0,0,0) 0%,rgba(0,0,0,.18) 25%,rgba(0,0,0,.5) 55%,rgba(0,0,0,.86) 85%,#000 100%),linear-gradient(to right,#ffa3a3 0%,#fdd2a0 9%,#f6fba2 17%,#b4f7a4 27%,#92f2a8 33%,#96f5d8 42%,#98f0f6 50%,#9cc4f4 58%,#a6a4f2 67%,#d6a2f6 77%,#fba4f4 84%,#fda6cf 92%,#ffa3a8 100%)"></div>
<div class="abs" style="left:699.4px;top:194.8px;width:5px;height:5px;border-radius:50%;border:1px solid #2a2a2a"></div>
<div class="abs" style="left:716px;top:183.5px;width:15px;height:154.5px;background:linear-gradient(to bottom,#ff0000 0%,#ff0000 18%,#f9003a 32%,#ff5068 46%,#fb8c98 60%,#f6bcc2 76%,#eee2e4 94%,#ebe8e8 100%)"></div>
<svg class="abs" style="left:711px;top:292.3px" width="5" height="6" viewBox="0 0 5 6"><path d="M0.5,0.3 L4.4,3 L0.5,5.7 Z" fill="#dadada"/></svg>
<svg class="abs" style="left:731px;top:292.3px" width="5" height="6" viewBox="0 0 5 6"><path d="M4.5,0.3 L0.6,3 L4.5,5.7 Z" fill="#dadada"/></svg>
<div class="abs" style="left:742.6px;top:180.2px;width:36.2px;height:47.8px;background:#f4a0a4;border:1px solid #1e1e1e;border-radius:1px"></div>
<svg class="abs" style="left:789.5px;top:209px" width="8" height="9" viewBox="0 0 8 9"><path d="M4,0.6 L7.2,2.4 V6.2 L4,8 L0.8,6.2 V2.4 Z M0.8,2.4 L4,4.2 L7.2,2.4 M4,4.2 V8" fill="none" stroke="#b8b8b8" stroke-width="0.8"/></svg>
<div class="abs" style="left:788.6px;top:220.8px;width:9.4px;height:8.6px;background:#ff8288;border:0.7px solid #ddd"></div>
<div class="abs" style="left:807px;top:181.3px;width:52.8px;height:11.8px;border:1.6px solid #e4e4e4;border-radius:8px"></div>
<div class="t b" style="left:826.6px;top:184.9px;font-size:8px;color:#f4f4f4">确定</div>
<div class="abs" style="left:807px;top:198.8px;width:54px;height:13px;border:1px solid #b4b4b4;border-radius:8px"></div>
<div class="t b" style="left:826.6px;top:202.4px;font-size:8px;color:#f4f4f4">取消</div>
<div class="abs" style="left:807px;top:216.2px;width:54px;height:13px;border:1px solid #b4b4b4;border-radius:8px"></div>
<div class="t b" style="left:818.6px;top:219.8px;font-size:8px;color:#f4f4f4">颜色色板</div>
<div class="abs" style="left:743.2px;top:240.6px;width:5px;height:5px;border-radius:50%;border:0.8px solid #dcdcdc"></div>
<div class="t b" style="left:753.5px;top:238.6px;font-size:7.8px;color:#f2f2f2">H:</div>
<div class="abs" style="left:764.8px;top:238.9px;width:37.6px;height:10.2px;background:#424242;border-radius:1px"></div>
<div class="t" style="left:767.3px;top:238.6px;font-size:8.5px;color:#f8f8f8">357°</div>
<div class="abs" style="left:743.2px;top:255.8px;width:5px;height:5px;border-radius:50%;border:0.8px solid #dcdcdc"></div>
<div class="abs" style="left:744.9px;top:257.5px;width:3.2px;height:3.2px;border-radius:50%;background:#f0f0f0"></div>
<div class="t b" style="left:753.5px;top:253.8px;font-size:7.8px;color:#f2f2f2">S:</div>
<div class="abs" style="left:764.8px;top:254.10000000000002px;width:37.6px;height:10.2px;background:#424242;border-radius:1px"></div>
<div class="t" style="left:767.3px;top:253.8px;font-size:8.5px;color:#f8f8f8">28%</div>
<div class="abs" style="left:743.2px;top:271.0px;width:5px;height:5px;border-radius:50%;border:0.8px solid #dcdcdc"></div>
<div class="t b" style="left:753.5px;top:269.0px;font-size:7.8px;color:#f2f2f2">B:</div>
<div class="abs" style="left:764.8px;top:269.3px;width:37.6px;height:10.2px;background:#424242;border-radius:1px"></div>
<div class="t" style="left:767.3px;top:269.0px;font-size:8.5px;color:#f8f8f8">91%</div>
<div class="abs" style="left:743.2px;top:286.3px;width:5px;height:5px;border-radius:50%;border:0.8px solid #dcdcdc"></div>
<div class="t b" style="left:753.5px;top:284.3px;font-size:7.8px;color:#f2f2f2">R:</div>
<div class="abs" style="left:764.8px;top:284.6px;width:37.6px;height:10.2px;background:#424242;border-radius:1px"></div>
<div class="t" style="left:767.3px;top:284.3px;font-size:8.5px;color:#f8f8f8">234</div>
<div class="abs" style="left:743.2px;top:301.5px;width:5px;height:5px;border-radius:50%;border:0.8px solid #dcdcdc"></div>
<div class="t b" style="left:753.5px;top:299.5px;font-size:7.8px;color:#f2f2f2">G:</div>
<div class="abs" style="left:764.8px;top:299.8px;width:37.6px;height:10.2px;background:#424242;border-radius:1px"></div>
<div class="t" style="left:767.3px;top:299.5px;font-size:8.5px;color:#f8f8f8">167</div>
<div class="abs" style="left:743.2px;top:316.5px;width:5px;height:5px;border-radius:50%;border:0.8px solid #dcdcdc"></div>
<div class="t b" style="left:753.5px;top:314.5px;font-size:7.8px;color:#f2f2f2">B:</div>
<div class="abs" style="left:764.8px;top:314.8px;width:37.6px;height:10.2px;background:#424242;border-radius:1px"></div>
<div class="t" style="left:767.3px;top:314.5px;font-size:8.5px;color:#f8f8f8">169</div>
<div class="t" style="left:813px;top:284.3px;font-size:7.8px;color:#c4c4c4">C:</div>
<div class="abs" style="left:824px;top:284.6px;width:37.6px;height:10.2px;background:#424242;border-radius:1px"></div>
<div class="t" style="left:826.3px;top:284.3px;font-size:8.5px;color:#f8f8f8">6%</div>
<div class="t" style="left:813px;top:299.5px;font-size:7.8px;color:#c4c4c4">M:</div>
<div class="abs" style="left:824px;top:299.8px;width:37.6px;height:10.2px;background:#424242;border-radius:1px"></div>
<div class="t" style="left:826.3px;top:299.5px;font-size:8.5px;color:#f8f8f8">44%</div>
<div class="t" style="left:813px;top:314.5px;font-size:7.8px;color:#c4c4c4">Y:</div>
<div class="abs" style="left:824px;top:314.8px;width:37.6px;height:10.2px;background:#424242;border-radius:1px"></div>
<div class="t" style="left:826.3px;top:314.5px;font-size:8.5px;color:#f8f8f8">23%</div>
<div class="t" style="left:813px;top:329.7px;font-size:7.8px;color:#c4c4c4">K:</div>
<div class="abs" style="left:824px;top:330px;width:37.6px;height:10.2px;background:#424242;border-radius:1px"></div>
<div class="t" style="left:826.3px;top:329.7px;font-size:8.5px;color:#f8f8f8">0%</div>
<div class="t" style="left:744.6px;top:329.7px;font-size:7.5px;color:#c8c8c8">#</div>
<div class="abs" style="left:750.6px;top:329.6px;width:53.6px;height:9.6px;background:#fff;border:0.9px solid #5b9ce0;border-radius:1px"></div>
<div class="abs" style="left:752.6px;top:331px;width:27.6px;height:8.4px;background:#b3d4fb;"></div>
<div class="t" style="left:753.6px;top:329.8px;font-size:8px;color:#3d6fa8">eaa7a9</div>
<div class="abs" style="left:550.4px;top:348.2px;width:5.8px;height:5.8px;border:0.9px solid #cfcfcf;border-radius:1px"></div>
<div class="t b" style="left:560.6px;top:347.9px;font-size:8.1px;color:#f2f2f2">仅限 Web 颜色</div>
<div class="abs" style="left:26px;top:488.5px;width:817.5px;height:6px;background:#fafafa;border-radius:3px 3px 0 0"></div>
</body></html>
